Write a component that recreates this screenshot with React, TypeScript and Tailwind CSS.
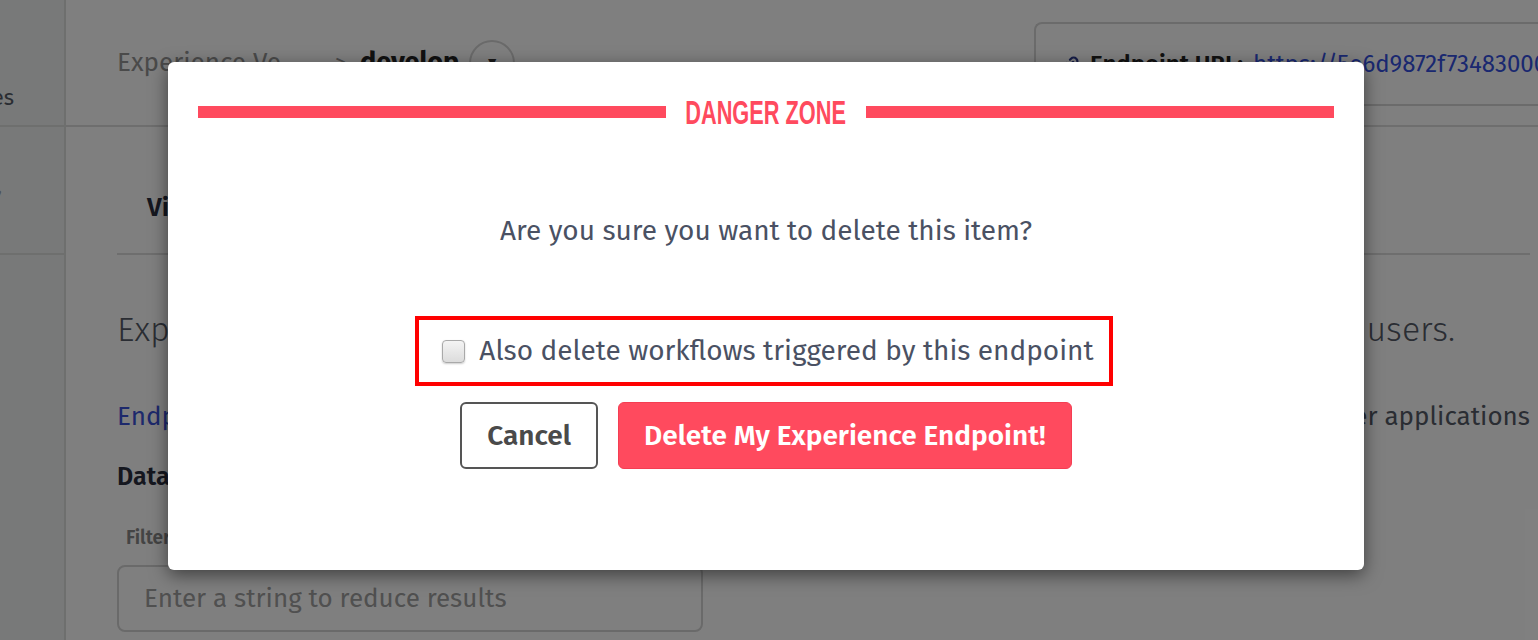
import { Link2 } from 'lucide-react';

function Sidebar() {
  return (
    <aside className="w-[66px] shrink-0 bg-[#f0f3f2] border-r-2 border-[#dcdedd] flex flex-col overflow-hidden">
      <div className="h-[127px] border-b-2 border-[#dcdedd] flex items-center justify-end pt-[70px] pr-[50px] text-[22px] text-[#555b66] whitespace-nowrap">
        Devices
      </div>
      <div className="h-[128px] border-b-2 border-[#dcdedd] flex items-center justify-end pb-[10px] pr-[62px] text-[22px] text-[#9aa0a8] whitespace-nowrap">
        Workflows,
      </div>
      <div className="flex-1" />
    </aside>
  );
}

function Header() {
  return (
    <header className="h-[127px] shrink-0 border-b-2 border-[#dcdcdc] flex items-center pl-[51px] relative">
      <span className="text-[26px] text-[#949494] w-[186px] truncate">Experience Versions</span>
      <span className="ml-[32px] text-[22px] text-[#949494]">&gt;</span>
      <span className="ml-[14px] text-[27px] font-bold text-[#222]">develop</span>
      <button className="ml-[10px] w-[46px] h-[46px] rounded-full border-2 border-[#d5d5d5] flex items-center justify-center text-[#333] text-[14px]">
        ▼
      </button>
      <div className="ml-auto self-start mt-[22px] w-[504px] h-[84px] rounded-l-[8px] border-2 border-r-0 border-[#d6d6d6] flex items-center pl-[26px] gap-[10px] whitespace-nowrap overflow-hidden">
        <Link2 className="w-[18px] h-[18px] text-[#2c3a8f] -rotate-45 shrink-0" strokeWidth={3} />
        <span className="text-[24px] font-semibold text-[#222]">Endpoint URL:</span>
        <span className="text-[24px] text-[#3450e0]">https://5e6d9872f734830001b8c2e4.onlosant.com</span>
      </div>
    </header>
  );
}

function Content() {
  return (
    <div className="pl-[51px] pr-[8px]">
      <div className="h-[128px] border-b-2 border-[#dcdcdc] flex items-center pt-[34px]">
        <span className="ml-[30px] text-[26px] font-semibold text-[#2a2e3e]">View Logs</span>
      </div>
      <div className="mt-[54px] w-[1338px] flex justify-between text-[34px] font-light text-[#555a66] leading-[42px] whitespace-nowrap">
        <span>Experience Endpoints</span>
        <span>respond to requests made by your users.</span>
      </div>
      <div className="mt-[50px] flex justify-between text-[26px] leading-[32px] whitespace-nowrap">
        <span className="text-[#3a52d9]">Endpoints</span>
        <span className="text-[#555a66]">the backend for other applications</span>
      </div>
      <div className="mt-[28px] text-[25px] font-semibold text-[#2a2e3e] leading-[32px]">Data Table</div>
      <div className="mt-[33px] ml-[9px] text-[19px] font-semibold text-[#888] leading-[24px]">Filter</div>
      <input
        className="mt-[15px] w-[586px] h-[67px] rounded-[8px] border-2 border-[#d4d4d4] px-[25px] text-[26px] placeholder-[#a0a0a0]"
        placeholder="Enter a string to reduce results"
      />
    </div>
  );
}

function DangerModal() {
  return (
    <div className="absolute left-[168px] top-[62px] w-[1196px] h-[508px] bg-white rounded-[6px] shadow-[0_5px_18px_rgba(0,0,0,0.5)] flex flex-col items-center">
      <div className="mt-[32px] w-full px-[30px] flex items-center gap-[20px]">
        <div className="flex-1 h-[12px] bg-[#ff4a5e]" />
        <span className="w-[160px] flex justify-center">
          <span className="scale-x-[0.64] whitespace-nowrap font-['Liberation_Sans',sans-serif] font-bold text-[34px] leading-[36px] text-[#ff4a5e]">
            DANGER ZONE
          </span>
        </span>
        <div className="flex-1 h-[12px] bg-[#ff4a5e]" />
      </div>

      <p className="mt-[84px] text-[28px] leading-[34px] text-[#4a5163]">Are you sure you want to delete this item?</p>

      <label className="mt-[68px] mr-[4px] h-[70px] border-[4px] border-[#ff0000] flex items-center pl-[23px] pr-[15px] gap-[14px]">
        <input
          type="checkbox"
          className="appearance-none w-[23px] h-[23px] rounded-[4px] border border-[#a9a9a9] bg-gradient-to-b from-[#f4f4f4] to-[#dcdcdc] shadow-[0_1px_2px_rgba(0,0,0,0.2)]"
        />
        <span className="text-[28px] leading-[34px] text-[#4a5163] whitespace-nowrap">Also delete workflows triggered by this endpoint</span>
      </label>

      <div className="mt-[16px] flex gap-[20px]">
        <button className="h-[67px] px-[25px] rounded-[6px] border-2 border-[#555] bg-white text-[28px] font-semibold text-[#4a4a4a]">
          Cancel
        </button>
        <button className="h-[67px] px-[25px] rounded-[6px] border border-[#f43e52] bg-[#ff4a5e] text-[28px] font-semibold text-white">
          Delete My Experience Endpoint!
        </button>
      </div>
    </div>
  );
}

export default function App() {
  return (
    <div className="w-[1538px] h-[640px] relative overflow-hidden bg-white font-['Fira_Sans','Open_Sans',sans-serif]">
      <div className="flex h-full">
        <Sidebar />
        <main className="flex-1 flex flex-col min-w-0">
          <Header />
          <Content />
        </main>
      </div>
      <div className="absolute inset-0 bg-black/50" />
      <DangerModal />
    </div>
  );
}
